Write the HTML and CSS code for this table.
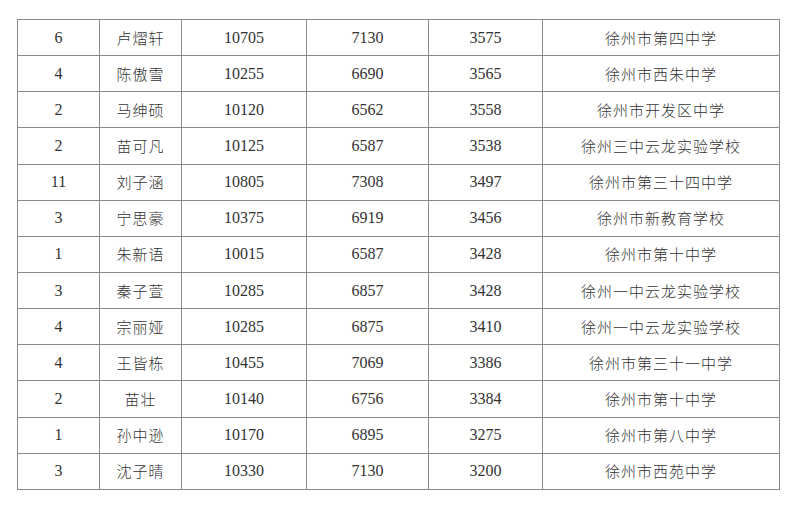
FILE: index.html
```html
<!DOCTYPE html>
<html lang="zh">
<head>
<meta charset="utf-8">
<link rel="stylesheet" href="styles.css">
</head>
<body>
<table class="scores">
  <colgroup>
    <col class="c1"><col class="c2"><col class="c3"><col class="c4"><col class="c5"><col class="c6">
  </colgroup>
  <tbody>
    <tr><td>6</td><td class="zh">卢熠轩</td><td>10705</td><td>7130</td><td>3575</td><td class="zh">徐州市第四中学</td></tr>
    <tr><td>4</td><td class="zh">陈傲雪</td><td>10255</td><td>6690</td><td>3565</td><td class="zh">徐州市西朱中学</td></tr>
    <tr><td>2</td><td class="zh">马绅硕</td><td>10120</td><td>6562</td><td>3558</td><td class="zh">徐州市开发区中学</td></tr>
    <tr><td>2</td><td class="zh">苗可凡</td><td>10125</td><td>6587</td><td>3538</td><td class="zh">徐州三中云龙实验学校</td></tr>
    <tr><td>11</td><td class="zh">刘子涵</td><td>10805</td><td>7308</td><td>3497</td><td class="zh">徐州市第三十四中学</td></tr>
    <tr><td>3</td><td class="zh">宁思豪</td><td>10375</td><td>6919</td><td>3456</td><td class="zh">徐州市新教育学校</td></tr>
    <tr><td>1</td><td class="zh">朱新语</td><td>10015</td><td>6587</td><td>3428</td><td class="zh">徐州市第十中学</td></tr>
    <tr><td>3</td><td class="zh">秦子萱</td><td>10285</td><td>6857</td><td>3428</td><td class="zh">徐州一中云龙实验学校</td></tr>
    <tr><td>4</td><td class="zh">宗丽娅</td><td>10285</td><td>6875</td><td>3410</td><td class="zh">徐州一中云龙实验学校</td></tr>
    <tr><td>4</td><td class="zh">王皆栋</td><td>10455</td><td>7069</td><td>3386</td><td class="zh">徐州市第三十一中学</td></tr>
    <tr><td>2</td><td class="zh">苗壮</td><td>10140</td><td>6756</td><td>3384</td><td class="zh">徐州市第十中学</td></tr>
    <tr><td>1</td><td class="zh">孙中逊</td><td>10170</td><td>6895</td><td>3275</td><td class="zh">徐州市第八中学</td></tr>
    <tr><td>3</td><td class="zh">沈子晴</td><td>10330</td><td>7130</td><td>3200</td><td class="zh">徐州市西苑中学</td></tr>
  </tbody>
</table>
</body>
</html>
```
FILE: styles.css
```css
html, body {
  margin: 0;
  padding: 0;
  background: #ffffff;
}
body {
  padding: 19px 0 0 17px;
}
.scores {
  border-collapse: collapse;
  table-layout: fixed;
  width: 763px;
  color: #333333;
  font-family: "Liberation Serif", "Noto Sans CJK SC", serif;
  font-size: 16px;
}
.scores td {
  border: 1px solid #8a8a8a;
  height: 35.15px;
  padding: 0;
  text-align: center;
  vertical-align: middle;
  line-height: 18px;
}
.scores td.zh {
  font-family: "Noto Sans CJK SC", sans-serif;
  font-size: 15px;
  font-weight: 300;
  letter-spacing: 1px;
}
.c1 { width: 82px; }
.c2 { width: 82px; }
.c3 { width: 125px; }
.c4 { width: 122px; }
.c5 { width: 114px; }
.c6 { width: 237px; }
```
